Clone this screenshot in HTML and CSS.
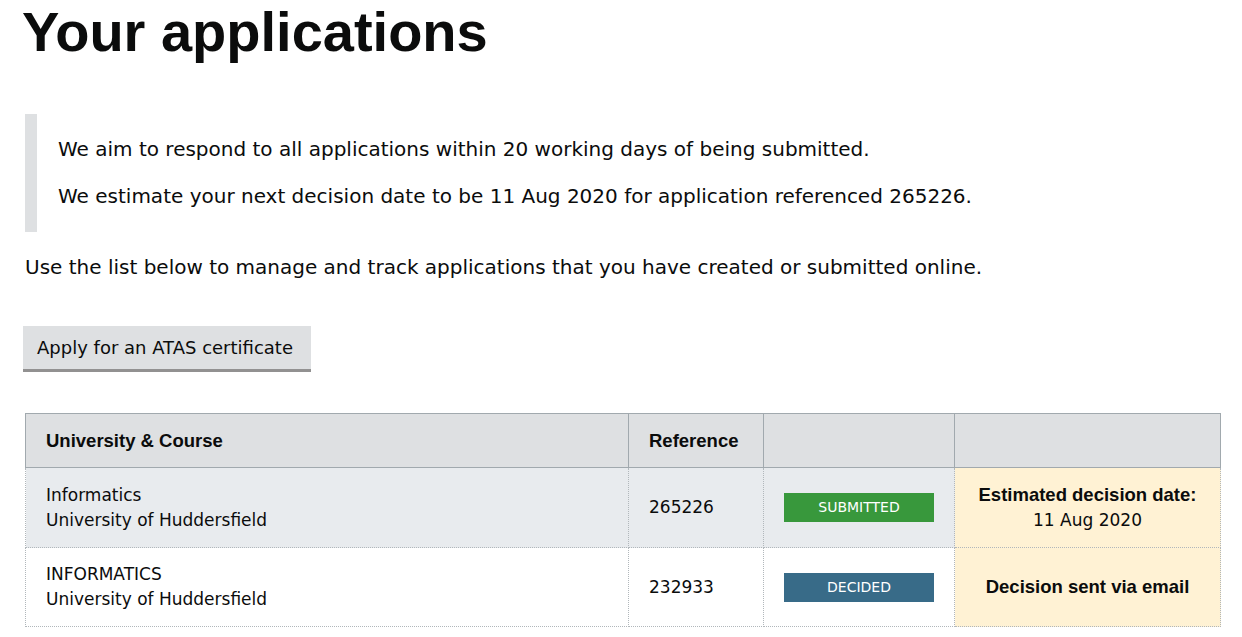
FILE: index.html
```html
<!DOCTYPE html>
<html lang="en">
<head>
<meta charset="utf-8">
<title>Your applications</title>
<link rel="stylesheet" href="styles.css">
</head>
<body>
<main class="page">
  <h1 class="heading">Your applications</h1>
  <div class="inset">
    <p class="inset-p">We aim to respond to all applications within 20 working days of being submitted.</p>
    <p class="inset-p">We estimate your next decision date to be 11 Aug 2020 for application referenced 265226.</p>
  </div>
  <p class="body-text">Use the list below to manage and track applications that you have created or submitted online.</p>
  <button class="button" type="button">Apply for an ATAS certificate</button>
  <table class="apps">
    <colgroup>
      <col class="c1"><col class="c2"><col class="c3"><col class="c4">
    </colgroup>
    <thead>
      <tr>
        <th class="th">University &amp; Course</th>
        <th class="th">Reference</th>
        <th class="th"></th>
        <th class="th"></th>
      </tr>
    </thead>
    <tbody>
      <tr class="row row-alt">
        <td class="td">Informatics<br>University of Huddersfield</td>
        <td class="td">265226</td>
        <td class="td"><span class="tag tag-green">Submitted</span></td>
        <td class="td td-note"><strong class="strong">Estimated decision date:</strong><br>11 Aug 2020</td>
      </tr>
      <tr class="row">
        <td class="td">INFORMATICS<br>University of Huddersfield</td>
        <td class="td">232933</td>
        <td class="td"><span class="tag tag-blue">Decided</span></td>
        <td class="td td-note"><strong class="strong">Decision sent via email</strong></td>
      </tr>
    </tbody>
  </table>
</main>
</body>
</html>
```

FILE: styles.css
```css
html, body {
  margin: 0;
  padding: 0;
  background: #ffffff;
}

body {
  font-family: "DejaVu Sans", "Liberation Sans", sans-serif;
  color: #0b0c0c;
}

.page {
  padding: 0 23px 0 25px;
}

.heading {
  margin: 0 0 0 -3px;
  padding-top: 2px;
  font-family: "Liberation Sans", Arial, sans-serif;
  font-size: 56px;
  line-height: 60px;
  font-weight: 700;
}

.inset {
  margin: 52px 0 0 0;
  padding: 23px 0 23px 21px;
  border-left: 12px solid #dee0e2;
}

.inset-p {
  margin: 0;
  font-size: 20px;
  line-height: 25px;
}

.inset-p + .inset-p {
  margin-top: 22px;
}

.body-text {
  margin: 23px 0 0 0;
  font-size: 20px;
  line-height: 25px;
}

.button {
  display: block;
  margin: 46px 0 0 -2px;
  padding: 0 18px 0 14px;
  height: 43px;
  border: 0;
  background: #dee0e2;
  box-shadow: 0 3px 0 #929191;
  font-family: "DejaVu Sans", "Liberation Sans", sans-serif;
  font-size: 18px;
  color: #0b0c0c;
  cursor: pointer;
}

.apps {
  margin-top: 44px;
  width: 1195px;
  border-collapse: collapse;
  table-layout: fixed;
  font-size: 17px;
  line-height: 25px;
}

.c1 { width: 603px; }
.c2 { width: 135px; }
.c3 { width: 191px; }
.c4 { width: 266px; }

.th {
  background: #dee0e2;
  border: 1px solid #a1a9ae;
  padding: 15px 20px 14px 20px;
  text-align: left;
  font-family: "Liberation Sans", Arial, sans-serif;
  font-size: 18.5px;
  line-height: 24px;
  font-weight: 700;
  height: 24px;
}

.td {
  border: 1px dotted #b1b7bb;
  padding: 14px 20px;
  height: 49px;
  vertical-align: middle;
  text-align: left;
}

.row-alt .td {
  background: #e8ebee;
}

.row .td-note {
  background: #fff2d4;
  text-align: center;
  padding: 14px 10px;
}

.strong {
  font-family: "Liberation Sans", Arial, sans-serif;
  font-size: 18.5px;
  font-weight: 700;
}

.tag {
  display: block;
  width: 150px;
  height: 29px;
  line-height: 29px;
  text-align: center;
  text-transform: uppercase;
  font-size: 14px;
  color: #ffffff;
}

.tag-green { background: #38983c; }
.tag-blue { background: #386b88; }
```
